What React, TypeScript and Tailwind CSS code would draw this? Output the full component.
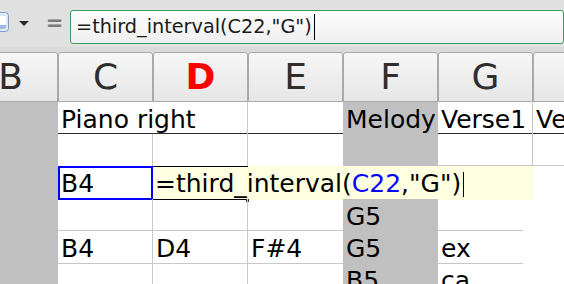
import React from "react";

function Cell({
  className = "",
  children,
}: {
  className?: string;
  children?: React.ReactNode;
}) {
  return (
    <div
      className={`relative h-full px-[3px] pt-[4px] leading-[28px] whitespace-nowrap text-black ${className}`}
    >
      {children}
    </div>
  );
}

export default function App() {
  const headers = ["B", "C", "D", "E", "F", "G", "H"];
  return (
    <div className="w-[564px] h-[284px] overflow-hidden bg-[#dcdcdc] font-['DejaVu_Sans',sans-serif]">
      {/* Formula toolbar */}
      <div className="flex h-[47px] items-start bg-[#e0e0e0]">
        <div className="w-[9px] h-full flex items-start pt-[12px] overflow-hidden">
          <svg width="13" height="20" viewBox="0 0 13 20" className="ml-[-4px] shrink-0">
            <rect x="0.5" y="0.5" width="12" height="19" rx="3" fill="#dfe9f6" stroke="#7d9cc8" />
            <rect x="3" y="4" width="7" height="9" rx="1.5" fill="#ffffff" />
            <path d="M3 13 L10 13 L10 16 Q6.5 18 3 16 Z" fill="#9db6dc" />
          </svg>
        </div>
        <div className="w-[30px] h-full flex items-center justify-center">
          <svg width="10" height="5" viewBox="0 0 10 5">
            <path d="M0 0 L10 0 L5 5 Z" fill="#2a2a2a" />
          </svg>
        </div>
        <div className="w-[31px] h-full flex items-center justify-center text-[21px] font-bold text-[#7a7a7a]">
          =
        </div>
        <div className="mt-[10px] w-[494px] h-[34px] border border-[#3a9c60] rounded-[3px] bg-linear-to-b from-[#fdfdfd] to-[#efefef] flex items-center pl-[5px] text-[19.25px] text-[#1a1a1a] whitespace-nowrap">
          <span>=third_interval(C22,"G")</span>
          <span className="ml-[2px] w-[1px] h-[26px] bg-black" />
        </div>
      </div>

      <div className="ml-[-37px] w-[665px]">
        {/* Column headers */}
        <div className="pt-[5px] bg-[#dadada]">
          <div className="grid grid-cols-[repeat(7,95px)] h-[50px]">
            {headers.map((h) => (
              <div
                key={h}
                className={`flex items-center justify-center border-x border-t border-b border-[#a9a9a9] rounded-t-[3px] bg-linear-to-b from-[#f6f6f6] to-[#e6e6e6] text-[36px] leading-none ${
                  h === "D" ? "text-[#ff0000] font-bold" : "text-[#2e2e2e]"
                }`}
              >
                {h}
              </div>
            ))}
          </div>
        </div>

        {/* Data rows */}
        <div className="bg-white text-[25px]">
          {/* Row 1 */}
          <div className="grid grid-cols-[repeat(7,95px)] h-[32px] border-b border-[#2e2e2e]">
            <Cell className="bg-[#c0c0c0]" />
            <Cell className="z-10 overflow-visible">Piano right</Cell>
            <Cell className="border-r border-[#c8c8c8]" />
            <Cell />
            <Cell className="bg-[#c0c0c0]">Melody</Cell>
            <Cell className="border-r border-[#c8c8c8]">Verse1</Cell>
            <Cell>Ve</Cell>
          </div>

          {/* Row 2 */}
          <div className="grid grid-cols-[repeat(7,95px)] h-[32px]">
            <Cell className="bg-[#c0c0c0]" />
            <Cell className="border-r border-[#c8c8c8]" />
            <Cell className="border-r border-[#c8c8c8]" />
            <Cell />
            <Cell className="bg-[#c0c0c0]" />
            <Cell className="border-r border-b border-[#c8c8c8]" />
            <Cell className="border-b border-[#c8c8c8]" />
          </div>

          {/* Row 3 (editing) */}
          <div className="grid grid-cols-[repeat(7,95px)] h-[33px]">
            <Cell className="bg-[#c0c0c0]" />
            <div className="h-full border-2 border-[#0000ff] px-[1px] pt-[2px] leading-[28px] text-black whitespace-nowrap">
              B4
            </div>
            <div className="relative col-span-4 h-full bg-[#ffffe1] pl-[2px] pt-[4px] leading-[28px] text-black whitespace-nowrap flex items-start">
              <div className="absolute left-0 top-0 w-[95px] h-full border-y border-black" />
              <div className="absolute left-[93px] bottom-[-2px] w-[3px] h-[3px] bg-[#333]" />
              <span className="relative">
                =third_interval(<span className="text-[#0000ff]">C22</span>,"G")
              </span>
              <span className="relative ml-[2px] mt-[2px] w-[1px] h-[25px] bg-black" />
            </div>
            <Cell />
          </div>

          {/* Row 4 */}
          <div className="grid grid-cols-[repeat(7,95px)] h-[32px]">
            <Cell className="bg-[#c0c0c0]" />
            <Cell className="border-r border-b border-[#c8c8c8]" />
            <Cell className="border-r border-b border-[#c8c8c8]" />
            <Cell className="border-b border-[#c8c8c8]" />
            <Cell className="bg-[#c0c0c0]">G5</Cell>
            <div className="h-full">
              <div className="w-[85px] h-full border-b border-[#c8c8c8]" />
            </div>
            <Cell />
          </div>

          {/* Row 5 */}
          <div className="grid grid-cols-[repeat(7,95px)] h-[32px]">
            <Cell className="bg-[#c0c0c0]" />
            <Cell className="border-r border-b border-[#c8c8c8]">B4</Cell>
            <Cell className="border-r border-b border-[#c8c8c8]">D4</Cell>
            <Cell className="border-b border-[#c8c8c8]">F#4</Cell>
            <Cell className="bg-[#c0c0c0]">G5</Cell>
            <div className="h-full">
              <div className="w-[85px] h-full border-b border-[#c8c8c8] px-[3px] pt-[4px] leading-[28px] text-black">
                ex
              </div>
            </div>
            <Cell />
          </div>

          {/* Row 6 */}
          <div className="grid grid-cols-[repeat(7,95px)] h-[32px]">
            <Cell className="bg-[#c0c0c0]" />
            <Cell className="border-r border-[#c8c8c8]" />
            <Cell className="border-r border-[#c8c8c8]" />
            <Cell />
            <Cell className="bg-[#c0c0c0]">B5</Cell>
            <Cell>ca</Cell>
            <Cell />
          </div>
        </div>
      </div>
    </div>
  );
}
